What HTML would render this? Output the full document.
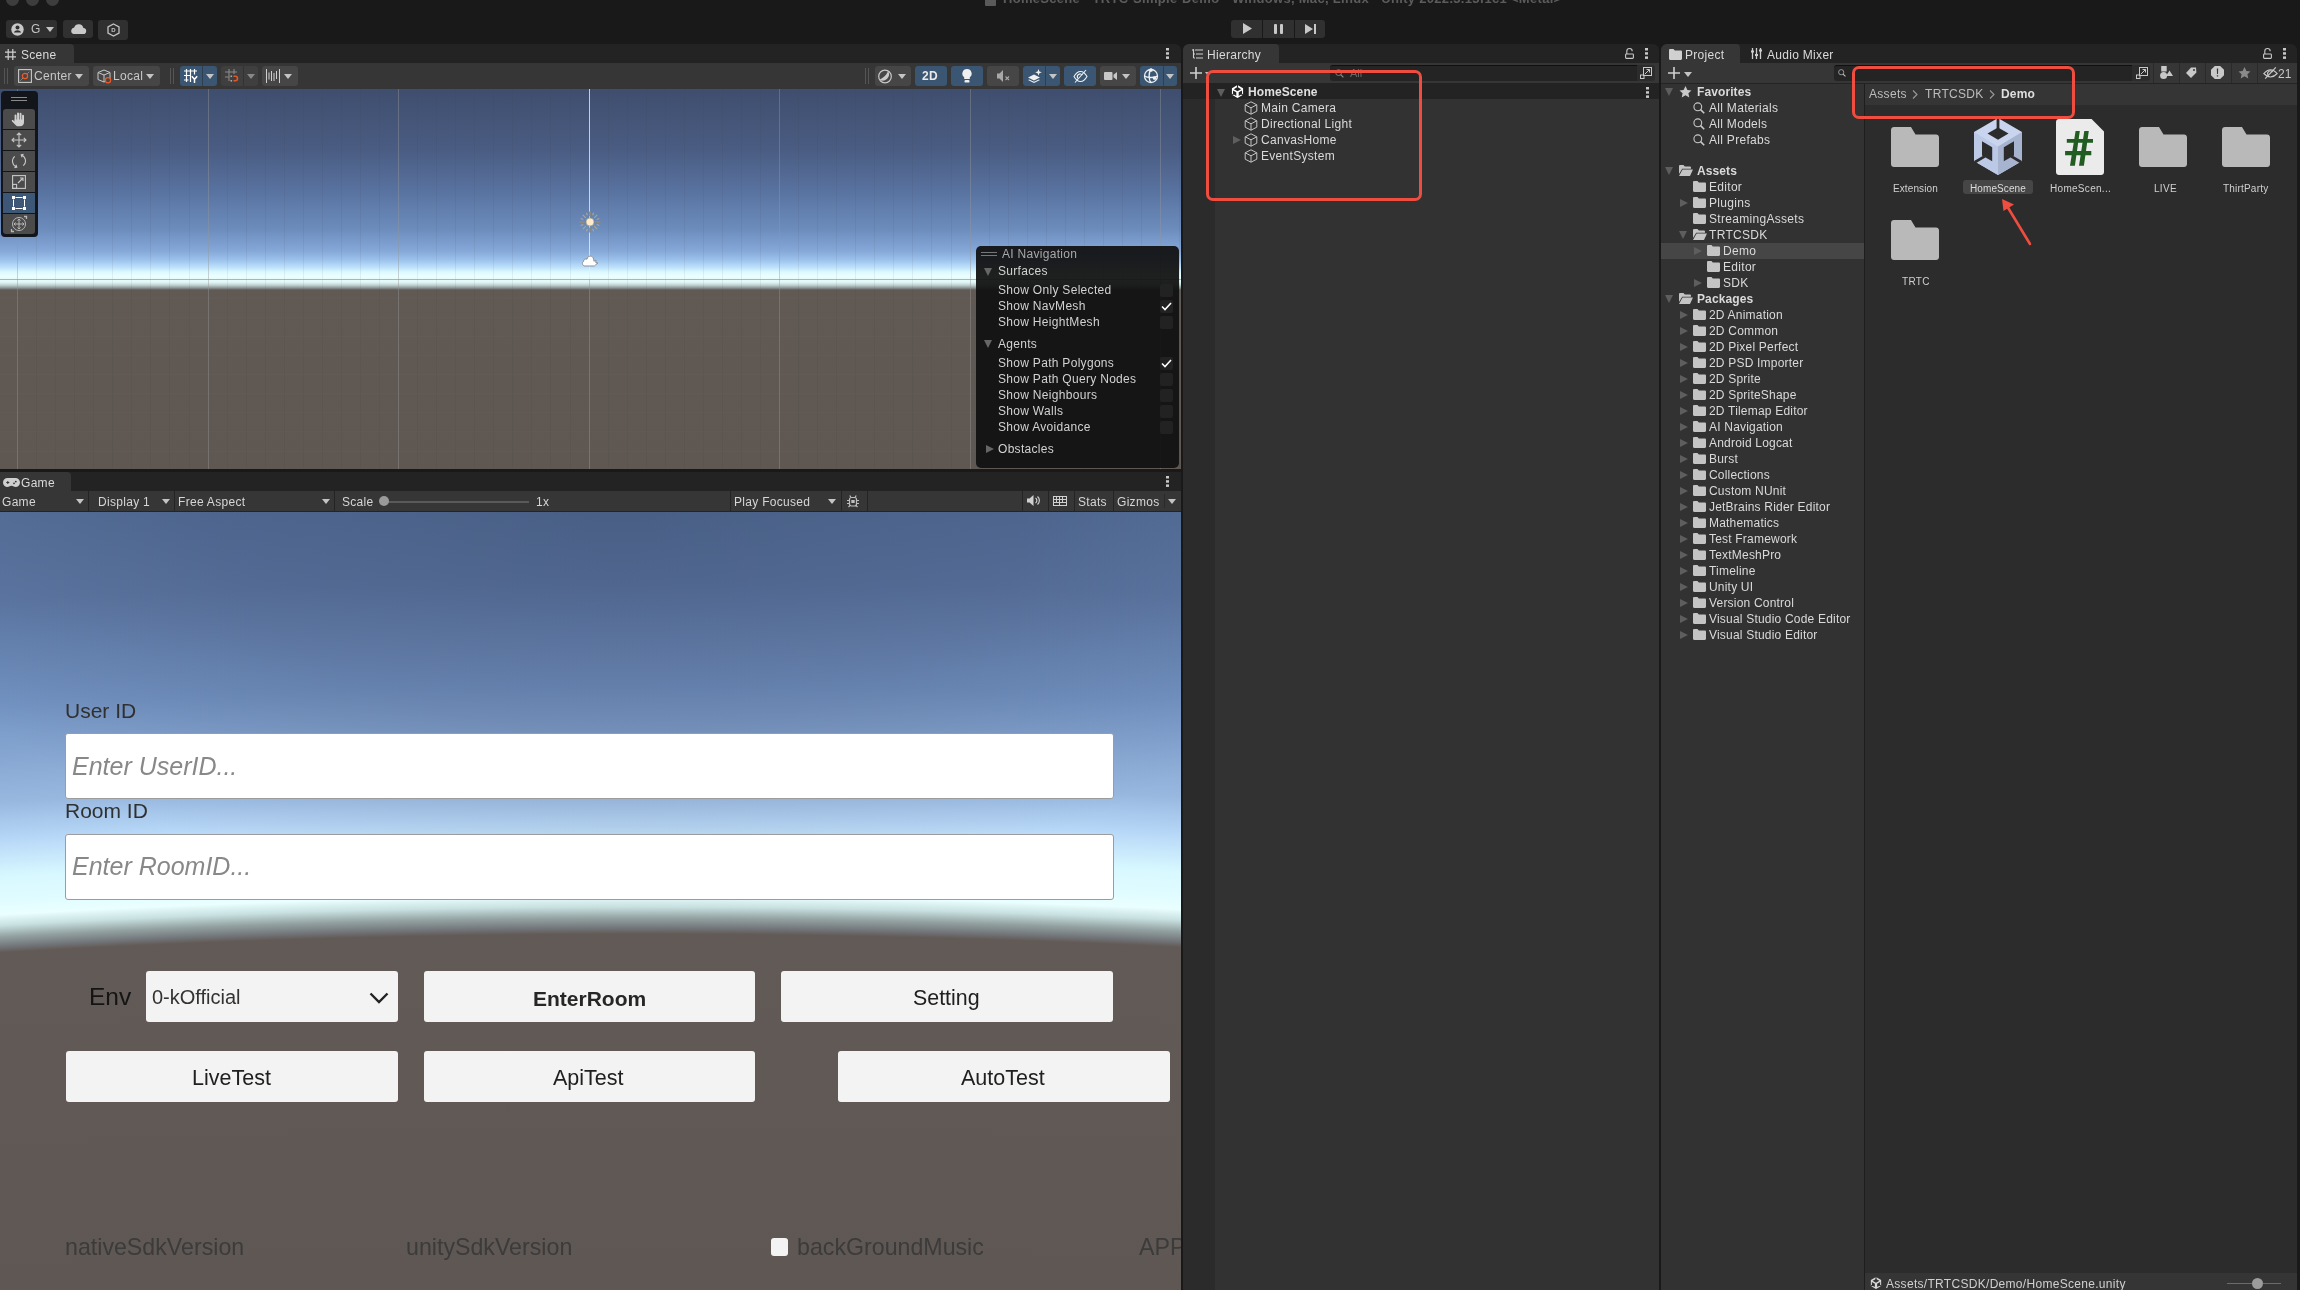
<!DOCTYPE html>
<html><head><meta charset="utf-8">
<style>
*{margin:0;padding:0;box-sizing:border-box}
html,body{width:2300px;height:1290px;overflow:hidden;background:#191919;font-family:"Liberation Sans",sans-serif;color:#dadada}
.a{position:absolute}
.t{position:absolute;white-space:nowrap;font-size:12px;line-height:14px;letter-spacing:0.3px;will-change:transform}
.btn{position:absolute;background:#303030;border-radius:3px}
.tbb{position:absolute;background:#464646;border-radius:3px}
.blu{background:#3b5673}
.sep{position:absolute;width:1px;background:#242424}
.tri-d{position:absolute;width:0;height:0;border-left:4px solid transparent;border-right:4px solid transparent;border-top:5px solid #c4c4c4}
.tri-r{position:absolute;width:0;height:0;border-top:4.5px solid transparent;border-bottom:4.5px solid transparent;border-left:8px solid #5e5e5e}
.tri-dd{position:absolute;width:0;height:0;border-left:4.5px solid transparent;border-right:4.5px solid transparent;border-top:8px solid #5e5e5e}
svg{position:absolute;overflow:visible;will-change:transform}
</style></head><body>

<!-- ===== TITLE BAR / MAIN TOOLBAR ===== -->
<div class="a" style="left:6px;top:-7px;width:13px;height:13px;border-radius:50%;background:#3d3d3d"></div>
<div class="a" style="left:26px;top:-7px;width:13px;height:13px;border-radius:50%;background:#3d3d3d"></div>
<div class="a" style="left:46px;top:-7px;width:13px;height:13px;border-radius:50%;background:#3d3d3d"></div>
<div class="a" style="left:985px;top:-6px;width:11px;height:12px;background:#5a5a5a;border-radius:1px"></div>
<div class="t" style="left:1003px;top:-9px;font-size:13px;line-height:15px;font-weight:bold;color:#5c5c5c">HomeScene - TRTC-Simple-Demo - Windows, Mac, Linux - Unity 2022.3.13f1c1 &lt;Metal&gt;</div>

<div class="btn" style="left:6px;top:20px;width:51px;height:18px"></div>
<div class="btn" style="left:63px;top:20px;width:30px;height:18px"></div>
<div class="btn" style="left:98px;top:20px;width:30px;height:20px"></div>

<div class="btn" style="left:1231px;top:20px;width:31px;height:18px;border-radius:3px 0 0 3px"></div>
<div class="btn" style="left:1263px;top:20px;width:31px;height:18px;border-radius:0"></div>
<div class="btn" style="left:1295px;top:20px;width:30px;height:18px;border-radius:0 3px 3px 0"></div>


<!-- main toolbar icons -->
<svg style="left:11px;top:23px" width="13" height="13" viewBox="0 0 13 13"><circle cx="6.5" cy="6.5" r="6.2" fill="#c8c8c8"/><circle cx="6.5" cy="4.6" r="2" fill="#303030"/><path d="M2.8 9.6c.8-1.6 2.2-2.3 3.7-2.3s2.9.7 3.7 2.3" fill="#303030"/></svg>
<div class="t" style="left:31px;top:23px;font-size:12px;line-height:12px;color:#c4c4c4">G</div>
<div class="tri-d" style="left:46px;top:27px;border-top-color:#c4c4c4"></div>
<svg style="left:70px;top:24px" width="16" height="10" viewBox="0 0 16 10"><path d="M3.5 10h9.5a3 3 0 0 0 .4-6 4.8 4.8 0 0 0-9.2-.6A3.4 3.4 0 0 0 3.5 10z" fill="#c8c8c8"/></svg>
<svg style="left:107px;top:23px" width="13" height="14" viewBox="0 0 13 14"><path d="M6.5 1 12 4v6l-5.5 3L1 10V4z" fill="none" stroke="#c4c4c4" stroke-width="1.3"/><text x="6.5" y="9.3" font-size="6" text-anchor="middle" fill="#c4c4c4" font-family="Liberation Sans" font-weight="bold">D</text></svg>
<svg style="left:1243px;top:23px" width="9" height="11" viewBox="0 0 9 11"><path d="M0 0 9 5.5 0 11z" fill="#c8c8c8"/></svg>
<div class="a" style="left:1274px;top:24px;width:3px;height:10px;background:#c8c8c8;border-radius:1px"></div>
<div class="a" style="left:1280px;top:24px;width:3px;height:10px;background:#c8c8c8;border-radius:1px"></div>
<svg style="left:1305px;top:24px" width="11" height="10" viewBox="0 0 11 10"><path d="M0 0 8 5 0 10z" fill="#c8c8c8"/><rect x="9" y="0" width="2" height="10" fill="#c8c8c8"/></svg>
<!-- ===== SCENE PANEL ===== -->
<div class="a" style="left:0;top:44px;width:1181px;height:19px;background:#232323;border-radius:0 6px 0 0"></div>
<div class="a" style="left:0;top:44px;width:74px;height:19px;background:#363636;border-radius:0 4px 0 0"></div>
<div class="a" style="left:0;top:63px;width:1181px;height:26px;background:#363636"></div>
<div id="sceneview" class="a" style="left:0;top:89px;width:1181px;height:380px;overflow:hidden;background:linear-gradient(#3f4e6e 0px,#4a5c82 60px,#58719e 100px,#6c8cbc 140px,#85a8d8 162px,#9cc2ec 171px,#bce0fa 178px,#dcf8ff 183px,#eaffff 187px,#e4f8f8 193px,#c0d4d4 196px,#8a9290 199px,#605954 201px,#5e5752 380px)">
<div class="a" style="left:17.0px;top:0;width:1px;height:380px;background:rgba(150,150,150,0.42)"></div><div class="a" style="left:36.0px;top:0;width:1px;height:380px;background:rgba(70,70,70,0.08)"></div><div class="a" style="left:55.1px;top:0;width:1px;height:380px;background:rgba(70,70,70,0.08)"></div><div class="a" style="left:74.2px;top:0;width:1px;height:380px;background:rgba(70,70,70,0.08)"></div><div class="a" style="left:93.2px;top:0;width:1px;height:380px;background:rgba(70,70,70,0.08)"></div><div class="a" style="left:112.2px;top:0;width:1px;height:380px;background:rgba(70,70,70,0.08)"></div><div class="a" style="left:131.3px;top:0;width:1px;height:380px;background:rgba(70,70,70,0.08)"></div><div class="a" style="left:150.3px;top:0;width:1px;height:380px;background:rgba(70,70,70,0.08)"></div><div class="a" style="left:169.4px;top:0;width:1px;height:380px;background:rgba(70,70,70,0.08)"></div><div class="a" style="left:188.5px;top:0;width:1px;height:380px;background:rgba(70,70,70,0.08)"></div><div class="a" style="left:207.5px;top:0;width:1px;height:380px;background:rgba(150,150,150,0.42)"></div><div class="a" style="left:226.6px;top:0;width:1px;height:380px;background:rgba(70,70,70,0.08)"></div><div class="a" style="left:245.6px;top:0;width:1px;height:380px;background:rgba(70,70,70,0.08)"></div><div class="a" style="left:264.6px;top:0;width:1px;height:380px;background:rgba(70,70,70,0.08)"></div><div class="a" style="left:283.7px;top:0;width:1px;height:380px;background:rgba(70,70,70,0.08)"></div><div class="a" style="left:302.8px;top:0;width:1px;height:380px;background:rgba(70,70,70,0.08)"></div><div class="a" style="left:321.8px;top:0;width:1px;height:380px;background:rgba(70,70,70,0.08)"></div><div class="a" style="left:340.9px;top:0;width:1px;height:380px;background:rgba(70,70,70,0.08)"></div><div class="a" style="left:359.9px;top:0;width:1px;height:380px;background:rgba(70,70,70,0.08)"></div><div class="a" style="left:378.9px;top:0;width:1px;height:380px;background:rgba(70,70,70,0.08)"></div><div class="a" style="left:398.0px;top:0;width:1px;height:380px;background:rgba(150,150,150,0.42)"></div><div class="a" style="left:417.1px;top:0;width:1px;height:380px;background:rgba(70,70,70,0.08)"></div><div class="a" style="left:436.1px;top:0;width:1px;height:380px;background:rgba(70,70,70,0.08)"></div><div class="a" style="left:455.2px;top:0;width:1px;height:380px;background:rgba(70,70,70,0.08)"></div><div class="a" style="left:474.2px;top:0;width:1px;height:380px;background:rgba(70,70,70,0.08)"></div><div class="a" style="left:493.2px;top:0;width:1px;height:380px;background:rgba(70,70,70,0.08)"></div><div class="a" style="left:512.3px;top:0;width:1px;height:380px;background:rgba(70,70,70,0.08)"></div><div class="a" style="left:531.4px;top:0;width:1px;height:380px;background:rgba(70,70,70,0.08)"></div><div class="a" style="left:550.4px;top:0;width:1px;height:380px;background:rgba(70,70,70,0.08)"></div><div class="a" style="left:569.5px;top:0;width:1px;height:380px;background:rgba(70,70,70,0.08)"></div><div class="a" style="left:588.5px;top:0;width:1px;height:190px;background:rgba(235,235,235,0.8)"></div><div class="a" style="left:588.5px;top:190px;width:1px;height:190px;background:rgba(150,150,150,0.45)"></div><div class="a" style="left:607.6px;top:0;width:1px;height:380px;background:rgba(70,70,70,0.08)"></div><div class="a" style="left:626.6px;top:0;width:1px;height:380px;background:rgba(70,70,70,0.08)"></div><div class="a" style="left:645.6px;top:0;width:1px;height:380px;background:rgba(70,70,70,0.08)"></div><div class="a" style="left:664.7px;top:0;width:1px;height:380px;background:rgba(70,70,70,0.08)"></div><div class="a" style="left:683.8px;top:0;width:1px;height:380px;background:rgba(70,70,70,0.08)"></div><div class="a" style="left:702.8px;top:0;width:1px;height:380px;background:rgba(70,70,70,0.08)"></div><div class="a" style="left:721.9px;top:0;width:1px;height:380px;background:rgba(70,70,70,0.08)"></div><div class="a" style="left:740.9px;top:0;width:1px;height:380px;background:rgba(70,70,70,0.08)"></div><div class="a" style="left:760.0px;top:0;width:1px;height:380px;background:rgba(70,70,70,0.08)"></div><div class="a" style="left:779.0px;top:0;width:1px;height:380px;background:rgba(150,150,150,0.42)"></div><div class="a" style="left:798.1px;top:0;width:1px;height:380px;background:rgba(70,70,70,0.08)"></div><div class="a" style="left:817.1px;top:0;width:1px;height:380px;background:rgba(70,70,70,0.08)"></div><div class="a" style="left:836.1px;top:0;width:1px;height:380px;background:rgba(70,70,70,0.08)"></div><div class="a" style="left:855.2px;top:0;width:1px;height:380px;background:rgba(70,70,70,0.08)"></div><div class="a" style="left:874.2px;top:0;width:1px;height:380px;background:rgba(70,70,70,0.08)"></div><div class="a" style="left:893.3px;top:0;width:1px;height:380px;background:rgba(70,70,70,0.08)"></div><div class="a" style="left:912.4px;top:0;width:1px;height:380px;background:rgba(70,70,70,0.08)"></div><div class="a" style="left:931.4px;top:0;width:1px;height:380px;background:rgba(70,70,70,0.08)"></div><div class="a" style="left:950.5px;top:0;width:1px;height:380px;background:rgba(70,70,70,0.08)"></div><div class="a" style="left:969.5px;top:0;width:1px;height:380px;background:rgba(150,150,150,0.42)"></div><div class="a" style="left:988.6px;top:0;width:1px;height:380px;background:rgba(70,70,70,0.08)"></div><div class="a" style="left:1007.6px;top:0;width:1px;height:380px;background:rgba(70,70,70,0.08)"></div><div class="a" style="left:1026.7px;top:0;width:1px;height:380px;background:rgba(70,70,70,0.08)"></div><div class="a" style="left:1045.7px;top:0;width:1px;height:380px;background:rgba(70,70,70,0.08)"></div><div class="a" style="left:1064.8px;top:0;width:1px;height:380px;background:rgba(70,70,70,0.08)"></div><div class="a" style="left:1083.8px;top:0;width:1px;height:380px;background:rgba(70,70,70,0.08)"></div><div class="a" style="left:1102.9px;top:0;width:1px;height:380px;background:rgba(70,70,70,0.08)"></div><div class="a" style="left:1121.9px;top:0;width:1px;height:380px;background:rgba(70,70,70,0.08)"></div><div class="a" style="left:1141.0px;top:0;width:1px;height:380px;background:rgba(70,70,70,0.08)"></div><div class="a" style="left:1160.0px;top:0;width:1px;height:380px;background:rgba(150,150,150,0.42)"></div><div class="a" style="left:1179.0px;top:0;width:1px;height:380px;background:rgba(70,70,70,0.08)"></div>
<div class="a" style="left:0;top:209.1px;width:1181px;height:1px;background:rgba(200,200,200,0.025)"></div><div class="a" style="left:0;top:228.1px;width:1181px;height:1px;background:rgba(200,200,200,0.025)"></div><div class="a" style="left:0;top:247.2px;width:1181px;height:1px;background:rgba(200,200,200,0.025)"></div><div class="a" style="left:0;top:266.2px;width:1181px;height:1px;background:rgba(200,200,200,0.025)"></div><div class="a" style="left:0;top:285.2px;width:1181px;height:1px;background:rgba(200,200,200,0.025)"></div><div class="a" style="left:0;top:304.3px;width:1181px;height:1px;background:rgba(200,200,200,0.025)"></div><div class="a" style="left:0;top:323.4px;width:1181px;height:1px;background:rgba(200,200,200,0.025)"></div><div class="a" style="left:0;top:342.4px;width:1181px;height:1px;background:rgba(200,200,200,0.025)"></div><div class="a" style="left:0;top:361.5px;width:1181px;height:1px;background:rgba(200,200,200,0.025)"></div><div class="a" style="left:0;top:190px;width:1181px;height:1px;background:rgba(150,150,150,0.7)"></div>
<svg style="left:579px;top:122px" width="22" height="22" viewBox="-11 -11 22 22"><g stroke="#8a8a80" stroke-width="1.8"><path d="M0-10.5v5M0 5.5v5M-10.5 0h5M5.5 0h5"/></g><g stroke="#a8a89c" stroke-width="1.1"><path d="M-7.2-7.2l3 3M7.2 7.2l-3-3M-7.2 7.2l3-3M7.2-7.2l-3 3"/><path d="M-3.6-9.3l1 2.6M3.6 9.3l-1-2.6M-9.3 3.6l2.6-1M9.3-3.6l-2.6 1M3.6-9.3l-1 2.6M-3.6 9.3l1-2.6M-9.3-3.6l2.6 1M9.3 3.6l-2.6-1"/></g><circle r="4" fill="#fdebc8" stroke="#9a9080" stroke-width=".6"/></svg>
<svg style="left:581px;top:164px" width="18" height="14" viewBox="0 0 18 14"><path d="M4 13c-2.6 0-3.6-3.4-1.4-4.6C2.4 6.2 4.6 5.4 6 6.2 6.4 2.2 12 2 12.6 6.2c.1.8.1 1.4.3 2l2.2-1.1-.4 2.4 2.3.5-2.1 1.4c-.3.9-1 1.6-2 1.6z" fill="#ffffff" stroke="#8f8f8f" stroke-width="1"/></svg>
<!-- tools overlay -->
<div class="a" style="left:1px;top:2px;width:37px;height:146px;background:#12151a;border-radius:4px"></div>
<div class="a" style="left:11px;top:8px;width:16px;height:1px;background:#8a8a8a"></div>
<div class="a" style="left:11px;top:11px;width:16px;height:1px;background:#8a8a8a"></div>
<div class="a" style="left:3px;top:20px;width:32px;height:20px;background:#4b4b4b;border-radius:3px 3px 0 0"></div>
<div class="a" style="left:3px;top:41px;width:32px;height:20px;background:#4b4b4b"></div>
<div class="a" style="left:3px;top:62px;width:32px;height:20px;background:#4b4b4b"></div>
<div class="a" style="left:3px;top:83px;width:32px;height:20px;background:#4b4b4b"></div>
<div class="a" style="left:3px;top:104px;width:32px;height:20px;background:#3c5876"></div>
<div class="a" style="left:3px;top:125px;width:32px;height:20px;background:#4b4b4b;border-radius:0 0 3px 3px"></div>
<svg style="left:11px;top:22px" width="16" height="16" viewBox="0 0 16 16" fill="#d0d0d0"><rect x="3.6" y="3.6" width="1.9" height="7" rx=".95"/><rect x="6.1" y="1.4" width="1.9" height="9" rx=".95"/><rect x="8.6" y="1.8" width="1.9" height="8.6" rx=".95"/><rect x="11.1" y="3.8" width="1.9" height="6.8" rx=".95"/><path d="M3.6 8.6h9.4v2.6c0 2.4-1.7 4.1-4 4.1H7.2c-1.2 0-2-.4-2.7-1.3L.9 10.2c-.5-.7.3-1.5 1-1.1L3.6 10.4z"/></svg>
<svg style="left:11px;top:43px" width="16" height="16" viewBox="0 0 16 16" fill="none" stroke="#c8c8c8" stroke-width="1.1"><path d="M8 1v14M1 8h14M5.8 3.2 8 1l2.2 2.2M5.8 12.8 8 15l2.2-2.2M3.2 5.8 1 8l2.2 2.2M12.8 5.8 15 8l-2.2 2.2"/></svg>
<svg style="left:11px;top:64px" width="16" height="16" viewBox="0 0 16 16" fill="none" stroke="#c8c8c8" stroke-width="1.1"><path d="M10.3 1.9A6.3 6.3 0 0 1 12.2 12.7"/><path d="M5.7 14.1A6.3 6.3 0 0 1 3.8 3.3"/><path d="M12.6 1.2 10.2 1.9l.9 2.3M3.4 14.8l2.4-.7-.9-2.3"/></svg>
<svg style="left:12px;top:86px" width="14" height="14" viewBox="0 0 14 14" fill="none" stroke="#c8c8c8" stroke-width="1.1"><rect x=".6" y=".6" width="12.8" height="12.8"/><rect x=".6" y="9.4" width="4" height="4"/><path d="M6 8l5-5M8 3h3v3"/></svg>
<svg style="left:12px;top:107px" width="14" height="14" viewBox="0 0 14 14"><path d="M3.5 1.5h7M3.5 12.5h7M1.5 3.5v7M12.5 3.5v7" stroke="#fff" stroke-width="1"/><g fill="#fff"><rect x="0" y="0" width="3" height="3"/><rect x="11" y="0" width="3" height="3"/><rect x="0" y="11" width="3" height="3"/><rect x="11" y="11" width="3" height="3"/></g></svg>
<svg style="left:11px;top:127px" width="16" height="16" viewBox="0 0 16 16" fill="none" stroke="#b8b8b8" stroke-width="1"><circle cx="8" cy="8" r="6.5"/><path d="M8 3v10M3 8h10M6.5 4.5 8 3l1.5 1.5M6.5 11.5 8 13l1.5-1.5M4.5 6.5 3 8l1.5 1.5M11.5 6.5 13 8l-1.5 1.5"/><path d="M13 .5h2.5V3M3 15.5H.5V13" stroke-width="1.3"/></svg>
<!-- AI navigation overlay -->
<div class="a" style="left:976px;top:157px;width:203px;height:222px;background:rgba(17,17,17,0.94);border-radius:5px"></div>
<div class="a" style="left:981px;top:163px;width:16px;height:1px;background:#777"></div>
<div class="a" style="left:981px;top:166px;width:16px;height:1px;background:#777"></div>
<div class="t" style="left:1002px;top:159px;font-size:12px;line-height:12px;color:#a8a8a8">AI Navigation</div>
<div class="tri-dd" style="left:984px;top:179px;border-top-color:#666"></div>
<div class="t" style="left:998px;top:176px;font-size:12px;line-height:12px;color:#d2d2d2">Surfaces</div>
<div class="t" style="left:998px;top:195px;font-size:12px;line-height:12px;color:#d2d2d2">Show Only Selected</div>
<div class="t" style="left:998px;top:211px;font-size:12px;line-height:12px;color:#d2d2d2">Show NavMesh</div>
<div class="t" style="left:998px;top:227px;font-size:12px;line-height:12px;color:#d2d2d2">Show HeightMesh</div>
<div class="tri-dd" style="left:984px;top:251px;border-top-color:#666"></div>
<div class="t" style="left:998px;top:249px;font-size:12px;line-height:12px;color:#d2d2d2">Agents</div>
<div class="t" style="left:998px;top:268px;font-size:12px;line-height:12px;color:#d2d2d2">Show Path Polygons</div>
<div class="t" style="left:998px;top:284px;font-size:12px;line-height:12px;color:#d2d2d2">Show Path Query Nodes</div>
<div class="t" style="left:998px;top:300px;font-size:12px;line-height:12px;color:#d2d2d2">Show Neighbours</div>
<div class="t" style="left:998px;top:316px;font-size:12px;line-height:12px;color:#d2d2d2">Show Walls</div>
<div class="t" style="left:998px;top:332px;font-size:12px;line-height:12px;color:#d2d2d2">Show Avoidance</div>
<div class="tri-r" style="left:986px;top:356px;border-left-color:#666"></div>
<div class="t" style="left:998px;top:354px;font-size:12px;line-height:12px;color:#d2d2d2">Obstacles</div>
<div class="a" style="left:1160px;top:195px;width:13px;height:13px;background:#222;border-radius:2px"></div><div class="a" style="left:1160px;top:211px;width:13px;height:13px;background:#222;border-radius:2px"></div><svg style="left:1161px;top:213px" width="11" height="9" viewBox="0 0 11 9"><path d="M1 4.5 4 7.5 10 1" fill="none" stroke="#ffffff" stroke-width="1.6"/></svg><div class="a" style="left:1160px;top:227px;width:13px;height:13px;background:#222;border-radius:2px"></div><div class="a" style="left:1160px;top:268px;width:13px;height:13px;background:#222;border-radius:2px"></div><svg style="left:1161px;top:270px" width="11" height="9" viewBox="0 0 11 9"><path d="M1 4.5 4 7.5 10 1" fill="none" stroke="#ffffff" stroke-width="1.6"/></svg><div class="a" style="left:1160px;top:284px;width:13px;height:13px;background:#222;border-radius:2px"></div><div class="a" style="left:1160px;top:300px;width:13px;height:13px;background:#222;border-radius:2px"></div><div class="a" style="left:1160px;top:316px;width:13px;height:13px;background:#222;border-radius:2px"></div><div class="a" style="left:1160px;top:332px;width:13px;height:13px;background:#222;border-radius:2px"></div>
</div>


<!-- scene tab -->
<svg style="left:5px;top:48.5px" width="11" height="11" viewBox="0 0 12 12" stroke="#d0d0d0" stroke-width="1.3"><path d="M3.5 0v12M8.5 0v12M0 3.5h12M0 8.5h12"/></svg>
<div class="t" style="left:21px;top:49px;font-size:12px;line-height:12px;color:#dadada">Scene</div>
<svg style="left:1166px;top:48px" width="3" height="11" viewBox="0 0 3 11" fill="#c8c8c8"><rect x="0" y="0" width="3" height="2.5"/><rect x="0" y="4.2" width="3" height="2.5"/><rect x="0" y="8.4" width="3" height="2.5"/></svg>
<!-- scene toolbar left -->
<div class="a" style="left:4px;top:68px;width:1px;height:16px;background:#555"></div>
<div class="a" style="left:7px;top:68px;width:1px;height:16px;background:#555"></div>
<div class="tbb" style="left:14px;top:66px;width:75px;height:20px"></div>
<svg style="left:18px;top:69px" width="14" height="14" viewBox="0 0 14 14"><rect x=".6" y=".6" width="12.8" height="12.8" fill="none" stroke="#c8c8c8" stroke-width="1.1"/><path d="M2.5 11.5 11.5 2.5" stroke="#c8c8c8" stroke-width=".8" stroke-dasharray="1.5 1"/><circle cx="7" cy="7" r="2.6" fill="#464646" stroke="#f05a28" stroke-width="1.2"/></svg>
<div class="t" style="left:34px;top:70px;font-size:12px;line-height:12px;color:#c8c8c8">Center</div>
<div class="tri-d" style="left:75px;top:74px"></div>
<div class="tbb" style="left:93px;top:66px;width:67px;height:20px"></div>
<svg style="left:97px;top:69px" width="16" height="15" viewBox="0 0 16 15"><path d="M7 1 13 3.5v7L7 13 1 10.5v-7z M1 3.5 7 6l6-2.5M7 6v7" fill="none" stroke="#c8c8c8" stroke-width="1"/><circle cx="11" cy="11.3" r="2.6" fill="#464646" stroke="#f05a28" stroke-width="1.2"/></svg>
<div class="t" style="left:113px;top:70px;font-size:12px;line-height:12px;color:#c8c8c8">Local</div>
<div class="tri-d" style="left:146px;top:74px"></div>
<div class="a" style="left:170px;top:68px;width:1px;height:16px;background:#555"></div>
<div class="a" style="left:173px;top:68px;width:1px;height:16px;background:#555"></div>
<div class="tbb blu" style="left:180px;top:66px;width:37px;height:20px"></div>
<div class="a" style="left:202px;top:66px;width:1px;height:20px;background:#2e3f52"></div>
<svg style="left:184px;top:69px" width="14" height="14" viewBox="0 0 14 14" fill="none" stroke="#ffffff" stroke-width="1.2"><path d="M2.5 0v13M6.5 0v13M10.5 0v5.5M0 2h13M0 6.5h6.5M0 11h4.5"/><path d="M7.8 7.2 10.5 10.3 13.2 7.2M10.5 10.3V14" stroke-width="1.5"/></svg>
<div class="tri-d" style="left:206px;top:74px"></div>
<div class="tbb" style="left:221px;top:66px;width:37px;height:20px;background:#3f3f3f"></div>
<div class="a" style="left:243px;top:66px;width:1px;height:20px;background:#333"></div>
<svg style="left:225px;top:69px" width="14" height="14" viewBox="0 0 14 14"><path d="M4 0v12M9 0v5M0 3h12M0 8h4" stroke="#8a8a8a" stroke-width="1.1"/><rect x="5.5" y="6.5" width="1.6" height="1.6" fill="#aaa"/><rect x="5.5" y="11" width="1.6" height="1.6" fill="#aaa"/><path d="M8.5 7.3h1.8a2.2 2.2 0 0 1 0 4.4H8.5" fill="none" stroke="#e0582a" stroke-width="1.6"/></svg>
<div class="tri-d" style="left:247px;top:74px;border-top-color:#888"></div>
<div class="tbb" style="left:262px;top:66px;width:36px;height:20px"></div>
<svg style="left:266px;top:69px" width="14" height="14" viewBox="0 0 14 14" fill="none" stroke="#d0d0d0" stroke-width="1"><path d="M.5 0v14M13.5 0v14M3 3.5v7M5.5 2v10M8 4v8M10.5 2v8"/></svg>
<div class="tri-d" style="left:284px;top:74px"></div>
<!-- scene toolbar right -->
<div class="a" style="left:865px;top:68px;width:1px;height:16px;background:#555"></div>
<div class="a" style="left:868px;top:68px;width:1px;height:16px;background:#555"></div>
<div class="tbb" style="left:875px;top:66px;width:36px;height:20px"></div>
<svg style="left:878px;top:69px" width="15" height="15" viewBox="0 0 15 15"><circle cx="7" cy="7.5" r="6.3" fill="none" stroke="#c8c8c8" stroke-width="1.2"/><path d="M10.15 2.04A6.3 6.3 0 0 1 1.54 10.65A16 16 0 0 0 10.15 2.04z" fill="#c8c8c8"/></svg>
<div class="tri-d" style="left:898px;top:74px"></div>
<div class="tbb blu" style="left:915px;top:66px;width:32px;height:20px"></div>
<div class="t" style="left:922px;top:70px;font-size:12px;line-height:12px;font-weight:bold;color:#e8e8e8">2D</div>
<div class="tbb blu" style="left:951px;top:66px;width:32px;height:20px"></div>
<svg style="left:962px;top:69px" width="10" height="14" viewBox="0 0 10 14"><path d="M5 0a4.6 4.6 0 0 1 2.8 8.3V10H2.2V8.3A4.6 4.6 0 0 1 5 0z" fill="#f0f0f0"/><rect x="2.5" y="11" width="5" height="2.6" rx="1.2" fill="#f0f0f0"/></svg>
<div class="tbb" style="left:987px;top:66px;width:32px;height:20px"></div>
<svg style="left:997px;top:70px" width="14" height="12" viewBox="0 0 14 12"><path d="M0 3.5h2.5L6 0v12L2.5 8.5H0z" fill="#a8a8a8"/><path d="M8.5 6.5 12 10M12 6.5 8.5 10" stroke="#a8a8a8" stroke-width="1.1"/></svg>
<div class="tbb blu" style="left:1023px;top:66px;width:37px;height:20px"></div>
<div class="a" style="left:1045px;top:66px;width:1px;height:20px;background:#2e3f52"></div>
<svg style="left:1027px;top:68px" width="16" height="16" viewBox="0 0 16 16" fill="#f0f0f0"><path d="M1 9.5 7 6.5l6 3-6 3z M1 12l6 3 6-3-1.2-.6L7 13.8 2.2 11.4z"/><path d="M11.5 1l.9 2.4 2.4.9-2.4.9-.9 2.4-.9-2.4-2.4-.9 2.4-.9z"/></svg>
<div class="tri-d" style="left:1049px;top:74px"></div>
<div class="tbb blu" style="left:1064px;top:66px;width:32px;height:20px"></div>
<svg style="left:1073px;top:69px" width="15" height="14" viewBox="0 0 15 14" fill="none" stroke="#f0f0f0" stroke-width="1.1"><path d="M1 7.5c2-3.5 4.2-5 6.5-5s4.5 1.5 6.5 5c-2 3.5-4.2 5-6.5 5S3 11 1 7.5z"/><path d="M13 1 2 13.5"/><path d="M5 9.5a2.7 2.7 0 0 1 4.5-3.5"/></svg>
<div class="tbb" style="left:1100px;top:66px;width:36px;height:20px"></div>
<svg style="left:1104px;top:71px" width="13" height="10" viewBox="0 0 13 10" fill="#c8c8c8"><rect x="0" y="1" width="8.5" height="8" rx="1"/><path d="M9.5 3.8 13 1v8L9.5 6.2z"/></svg>
<div class="tri-d" style="left:1122px;top:74px"></div>
<div class="tbb blu" style="left:1140px;top:66px;width:37px;height:20px"></div>
<div class="a" style="left:1163px;top:66px;width:1px;height:20px;background:#2e3f52"></div>
<svg style="left:1143px;top:68px" width="16" height="16" viewBox="0 0 16 16" fill="none" stroke="#f0f0f0" stroke-width="1.3"><circle cx="8" cy="8" r="6.5"/><path d="M1.5 8c2.5 2 10.5 2 13 0M8 1.5C5.5 4 5.5 12 8 14.5"/><circle cx="8" cy="2" r="1.2" fill="#f0f0f0"/><circle cx="11.5" cy="10" r="1.2" fill="#f0f0f0"/></svg>
<div class="tri-d" style="left:1166px;top:74px"></div>
<!-- ===== GAME PANEL ===== -->
<div class="a" style="left:0;top:469px;width:1181px;height:3px;background:#191919"></div>
<div class="a" style="left:0;top:472px;width:1181px;height:19px;background:#232323"></div>
<div class="a" style="left:0;top:472px;width:71px;height:19px;background:#363636;border-radius:0 4px 0 0"></div>
<div class="a" style="left:0;top:491px;width:1181px;height:20px;background:#363636"></div>
<div id="gameview" class="a" style="left:0;top:511px;width:1181px;height:779px;overflow:hidden;background:radial-gradient(ellipse 740px 400px at 620px 0px, rgba(40,50,80,0.3) 0%, rgba(40,50,80,0.18) 55%, rgba(40,50,80,0) 100%),radial-gradient(circle 11600px at 640px 11422px,#5f5753 10643px,#625a56 10999px,#72767a 11005px,#94a2a2 11015px,#c8e0e0 11026px,#eaffff 11037px,#e0fcff 11051px,#d8f8ff 11075px,#b8d8f8 11111px,#98b8e0 11149px,#7393c2 11246px,#5d78a4 11351px,#55709a 11440px)">
<div class="a" style="left:65px;top:222px;width:1049px;height:66px;background:#fff;border:1px solid #9c9c9c;border-radius:3px"></div>
<div class="a" style="left:65px;top:323px;width:1049px;height:66px;background:#fff;border:1px solid #9c9c9c;border-radius:3px"></div>
<div class="t" style="left:65px;top:189px;font-size:21px;line-height:21px;letter-spacing:0;color:#303030">User ID</div>
<div class="t" style="left:65px;top:289px;font-size:21px;line-height:21px;letter-spacing:0;color:#303030">Room ID</div>
<div class="t" style="left:72px;top:243px;font-size:25px;line-height:25px;letter-spacing:0;font-style:italic;color:#888888">Enter UserID...</div>
<div class="t" style="left:72px;top:343px;font-size:25px;line-height:25px;letter-spacing:0;font-style:italic;color:#888888">Enter RoomID...</div>
<div class="t" style="left:89px;top:474px;font-size:24.5px;line-height:24.5px;letter-spacing:0;color:#141414">Env</div>
<div class="a" style="left:146px;top:460px;width:252px;height:51px;background:#f3f3f3;border-radius:3px"></div>
<div class="t" style="left:152px;top:476px;font-size:20px;line-height:20px;letter-spacing:0;color:#333333">0-kOfficial</div>
<svg style="left:369px;top:481px" width="20" height="12" viewBox="0 0 20 12"><path d="M1.5 1.5 10 10 18.5 1.5" fill="none" stroke="#222" stroke-width="2.4"/></svg>
<div class="a" style="left:424px;top:460px;width:331px;height:51px;background:#f3f3f3;border-radius:3px"></div>
<div class="t" style="left:533px;top:477px;font-size:21px;line-height:21px;letter-spacing:0;font-weight:bold;color:#262626">EnterRoom</div>
<div class="a" style="left:781px;top:460px;width:332px;height:51px;background:#f3f3f3;border-radius:3px"></div>
<div class="t" style="left:913px;top:477px;font-size:21.4px;line-height:21px;letter-spacing:0;color:#202020">Setting</div>
<div class="a" style="left:66px;top:540px;width:332px;height:51px;background:#f3f3f3;border-radius:3px"></div>
<div class="t" style="left:192px;top:557px;font-size:21.5px;line-height:21px;letter-spacing:0;color:#202020">LiveTest</div>
<div class="a" style="left:424px;top:540px;width:331px;height:51px;background:#f3f3f3;border-radius:3px"></div>
<div class="t" style="left:553px;top:557px;font-size:21.5px;line-height:21px;letter-spacing:0;color:#202020">ApiTest</div>
<div class="a" style="left:838px;top:540px;width:332px;height:51px;background:#f3f3f3;border-radius:3px"></div>
<div class="t" style="left:961px;top:557px;font-size:21.5px;line-height:21px;letter-spacing:0;color:#202020">AutoTest</div>
<div class="t" style="left:65px;top:725px;font-size:23.2px;line-height:23px;letter-spacing:0;color:#3b3b3b">nativeSdkVersion</div>
<div class="t" style="left:406px;top:725px;font-size:23.2px;line-height:23px;letter-spacing:0;color:#3b3b3b">unitySdkVersion</div>
<div class="a" style="left:771px;top:727px;width:17px;height:18px;background:#f3f3f3;border-radius:3px"></div>
<div class="t" style="left:797px;top:725px;font-size:23.2px;line-height:23px;letter-spacing:0;color:#3b3b3b">backGroundMusic</div>
<div class="t" style="left:1139px;top:725px;font-size:23.2px;line-height:23px;letter-spacing:0;color:#3b3b3b">APP</div>
</div>
<div class="a" style="left:0;top:511px;width:1181px;height:1px;background:#242424"></div>
<!-- game tab -->
<svg style="left:4px;top:478px" width="15" height="9" viewBox="0 0 15 9"><path d="M3.5 0h8a3.5 3.5 0 0 1 0 9c-1.5 0-2-1.3-4-1.3S5 9 3.5 9a3.5 3.5 0 0 1 0-9z" fill="#cfcfcf"/><path d="M2.3 4.5h3M3.8 3v3" stroke="#333" stroke-width="1"/><circle cx="10" cy="5.3" r=".9" fill="#333"/><circle cx="11.8" cy="3.6" r=".9" fill="#333"/></svg>
<div class="t" style="left:21px;top:477px;font-size:12px;line-height:12px;color:#dadada">Game</div>
<svg style="left:1166px;top:476px" width="3" height="11" viewBox="0 0 3 11" fill="#c8c8c8"><rect x="0" y="0" width="3" height="2.5"/><rect x="0" y="4.2" width="3" height="2.5"/><rect x="0" y="8.4" width="3" height="2.5"/></svg>
<div class="t" style="left:2px;top:496px;font-size:12px;line-height:12px;color:#d6d6d6">Game</div>
<div class="tri-d" style="left:76px;top:499px"></div>
<div class="sep" style="left:88px;top:491px;height:20px"></div>
<div class="t" style="left:98px;top:496px;font-size:12px;line-height:12px;color:#d6d6d6">Display 1</div>
<div class="tri-d" style="left:162px;top:499px"></div>
<div class="sep" style="left:174px;top:491px;height:20px"></div>
<div class="t" style="left:178px;top:496px;font-size:12px;line-height:12px;color:#d6d6d6">Free Aspect</div>
<div class="tri-d" style="left:322px;top:499px"></div>
<div class="sep" style="left:334px;top:491px;height:20px"></div>
<div class="t" style="left:342px;top:496px;font-size:12px;line-height:12px;color:#d6d6d6">Scale</div>
<div class="a" style="left:384px;top:501px;width:145px;height:2px;background:#5a5a5a"></div>
<div class="a" style="left:379px;top:496px;width:10px;height:10px;border-radius:50%;background:#9a9a9a"></div>
<div class="t" style="left:536px;top:496px;font-size:12px;line-height:12px;color:#d6d6d6">1x</div>
<div class="sep" style="left:730px;top:491px;height:20px"></div>
<div class="t" style="left:734px;top:496px;font-size:12px;line-height:12px;color:#d6d6d6">Play Focused</div>
<div class="tri-d" style="left:828px;top:499px"></div>
<div class="sep" style="left:841px;top:491px;height:20px"></div>
<svg style="left:846px;top:494px" width="14" height="14" viewBox="0 0 14 14" fill="none" stroke="#bdbdbd" stroke-width="1.2"><rect x="3.5" y="3.5" width="7" height="8.5" rx="2"/><rect x="5.3" y="6" width="3.4" height="3" fill="#bdbdbd" stroke="none"/><path d="M5 3.5 3.8 1.5M9 3.5l1.2-2M3.5 6.5H1M3.5 9.5H1M10.5 6.5H13M10.5 9.5H13M4 11.5 2.5 13M10 11.5l1.5 1.5"/></svg>
<div class="sep" style="left:867px;top:491px;height:20px"></div>
<div class="sep" style="left:1022px;top:491px;height:20px"></div>
<svg style="left:1027px;top:495px" width="14" height="11" viewBox="0 0 14 11"><path d="M0 3.5h2.5L6.5 0v11L2.5 7.5H0z" fill="#d0d0d0"/><path d="M8.5 3a3 3 0 0 1 0 5M10.5 1.5a5.2 5.2 0 0 1 0 8" fill="none" stroke="#d0d0d0" stroke-width="1.2"/></svg>
<div class="sep" style="left:1048px;top:491px;height:20px"></div>
<svg style="left:1053px;top:496px" width="14" height="10" viewBox="0 0 14 10" fill="none" stroke="#d0d0d0" stroke-width="1"><rect x=".5" y=".5" width="13" height="9"/><path d="M.5 3.5h13M.5 6.5h13M3.5.5v6M6.5.5v9M9.5.5v6"/></svg>
<div class="sep" style="left:1074px;top:491px;height:20px"></div>
<div class="t" style="left:1078px;top:496px;font-size:12px;line-height:12px;color:#d6d6d6">Stats</div>
<div class="sep" style="left:1113px;top:491px;height:20px"></div>
<div class="t" style="left:1117px;top:496px;font-size:12px;line-height:12px;color:#d6d6d6">Gizmos</div>
<div class="sep" style="left:1164px;top:494px;height:14px;background:#2a2a2a"></div>
<div class="tri-d" style="left:1168px;top:499px"></div>


<!-- ===== HIERARCHY PANEL ===== -->
<div class="a" style="left:1183px;top:44px;width:476px;height:19px;background:#232323;border-radius:6px 6px 0 0"></div>
<div class="a" style="left:1183px;top:44px;width:96px;height:19px;background:#363636;border-radius:6px 4px 0 0"></div>
<div class="a" style="left:1183px;top:63px;width:476px;height:20px;background:#363636"></div>
<div class="a" style="left:1183px;top:83px;width:476px;height:16px;background:#232323"></div>
<div class="a" style="left:1183px;top:99px;width:476px;height:1191px;background:#323232"></div>
<div class="a" style="left:1183px;top:99px;width:32px;height:1191px;background:#2b2b2b"></div>

<!-- ===== PROJECT PANEL ===== -->
<div class="a" style="left:1661px;top:44px;width:636px;height:19px;background:#232323;border-radius:6px 6px 0 0"></div>
<div class="a" style="left:1661px;top:44px;width:79px;height:19px;background:#363636;border-radius:6px 4px 0 0"></div>
<div class="a" style="left:1661px;top:63px;width:636px;height:20px;background:#363636"></div>
<div class="a" style="left:1661px;top:83px;width:636px;height:1px;background:#242424"></div>
<div class="a" style="left:1661px;top:84px;width:203px;height:1206px;background:#323232"></div>
<div class="a" style="left:1864px;top:84px;width:1px;height:1206px;background:#1e1e1e"></div>
<div class="a" style="left:1865px;top:84px;width:432px;height:1206px;background:#2c2c2c"></div>
<div class="a" style="left:1865px;top:84px;width:432px;height:21px;background:#353535"></div>
<div class="a" style="left:1865px;top:1273px;width:432px;height:17px;background:#353535"></div>


<!-- hierarchy content -->
<svg style="left:1192px;top:49px" width="11" height="10" viewBox="0 0 11 10" stroke="#d0d0d0" stroke-width="1.1"><path d="M3 1h8M4 5h7M4 9h7M1.5 1v8M1.5 5h1.5M1.5 9h1.5"/><circle cx="1.2" cy="1" r="1" fill="#d0d0d0" stroke="none"/></svg>
<div class="t" style="left:1207px;top:49.3px;font-size:12px;line-height:12px;letter-spacing:0.3px;color:#dadada;font-weight:normal">Hierarchy</div>
<svg style="left:1625px;top:48px" width="9" height="11" viewBox="0 0 9 11" fill="none" stroke="#c8c8c8" stroke-width="1.1"><rect x=".6" y="6" width="7.8" height="4.4" rx=".8"/><path d="M1.8 6V3.2a2.7 2.7 0 0 1 5.4 0"/></svg>
<svg style="left:1645px;top:48px" width="3" height="11" viewBox="0 0 3 11" fill="#c8c8c8"><rect x="0" y="0" width="3" height="2.5"/><rect x="0" y="4.2" width="3" height="2.5"/><rect x="0" y="8.4" width="3" height="2.5"/></svg>
<svg style="left:1190px;top:67px" width="12" height="12" viewBox="0 0 12 12" stroke="#d0d0d0" stroke-width="1.6"><path d="M6 0v12M0 6h12"/></svg>
<div class="tri-d" style="left:1205px;top:72px;border-left-width:3px;border-right-width:3px;border-top-width:4px"></div>
<div class="a" style="left:1330px;top:65px;width:307px;height:16px;background:#242424;border-radius:3px 0 0 3px;border-top:1px solid #101010"></div>
<svg style="left:1335px;top:69px" width="9" height="9" viewBox="0 0 12 12" fill="none" stroke="#8a8a8a" stroke-width="1.1"><circle cx="4.8" cy="4.8" r="3.9"/><path d="M7.6 7.6 11.2 11.2" stroke-width="1.6"/></svg>
<div class="t" style="left:1350px;top:67.7px;font-size:11px;line-height:11px;letter-spacing:0px;color:#6a6a6a;font-weight:normal">All</div>
<div class="a" style="left:1637px;top:65px;width:18px;height:16px;background:#2c2c2c;border-radius:0 3px 3px 0"></div>
<svg style="left:1640px;top:67px" width="12" height="12" viewBox="0 0 12 12" fill="none" stroke="#c8c8c8" stroke-width="1"><rect x="3.5" y=".5" width="8" height="8"/><rect x=".5" y="8" width="3.5" height="3.5"/><path d="M5 7 9.5 2.5M6.5 2.5h3v3"/></svg>
<div class="tri-dd" style="left:1217px;top:89px"></div>
<svg style="left:1231px;top:85px" width="13" height="13" viewBox="0 0 14 14" fill="#ffffff"><path d="M7 0 13 3.5v7L7 14 1 10.5v-7z M7 2.2 3 4.5 7 6.8l4-2.3z M2.2 5.8v4l3.5 2V7.8z M11.8 5.8 8.3 7.8v4l3.5-2z" fill-rule="evenodd"/><path d="M6.4 0h1.2v3.5H6.4z M1 10 4 8.3l.6 1L1.6 11z M13 10 10 8.3l-.6 1 3 1.7z" fill="#2a2a2a"/></svg>
<div class="t" style="left:1248px;top:85.8px;font-size:12px;line-height:12px;letter-spacing:0.1px;color:#e0e0e0;font-weight:bold">HomeScene</div>
<svg style="left:1646px;top:87px" width="3" height="11" viewBox="0 0 3 11" fill="#c8c8c8"><rect x="0" y="0" width="3" height="2.5"/><rect x="0" y="4.2" width="3" height="2.5"/><rect x="0" y="8.4" width="3" height="2.5"/></svg>
<svg style="left:1244px;top:101px" width="14" height="14" viewBox="0 0 14 14" fill="none" stroke="#c4c4c4" stroke-width="1"><path d="M7 .8 12.8 3.8v6.4L7 13.2 1.2 10.2V3.8z M1.2 3.8 7 6.8l5.8-3M7 6.8v6.4"/></svg>
<div class="t" style="left:1261px;top:101.8px;font-size:12px;line-height:12px;letter-spacing:0.3px;color:#dadada;font-weight:normal">Main Camera</div>
<svg style="left:1244px;top:117px" width="14" height="14" viewBox="0 0 14 14" fill="none" stroke="#c4c4c4" stroke-width="1"><path d="M7 .8 12.8 3.8v6.4L7 13.2 1.2 10.2V3.8z M1.2 3.8 7 6.8l5.8-3M7 6.8v6.4"/></svg>
<div class="t" style="left:1261px;top:117.8px;font-size:12px;line-height:12px;letter-spacing:0.3px;color:#dadada;font-weight:normal">Directional Light</div>
<div class="tri-r" style="left:1233px;top:136px"></div>
<svg style="left:1244px;top:133px" width="14" height="14" viewBox="0 0 14 14" fill="none" stroke="#c4c4c4" stroke-width="1"><path d="M7 .8 12.8 3.8v6.4L7 13.2 1.2 10.2V3.8z M1.2 3.8 7 6.8l5.8-3M7 6.8v6.4"/></svg>
<div class="t" style="left:1261px;top:133.8px;font-size:12px;line-height:12px;letter-spacing:0.3px;color:#dadada;font-weight:normal">CanvasHome</div>
<svg style="left:1244px;top:149px" width="14" height="14" viewBox="0 0 14 14" fill="none" stroke="#c4c4c4" stroke-width="1"><path d="M7 .8 12.8 3.8v6.4L7 13.2 1.2 10.2V3.8z M1.2 3.8 7 6.8l5.8-3M7 6.8v6.4"/></svg>
<div class="t" style="left:1261px;top:149.8px;font-size:12px;line-height:12px;letter-spacing:0.3px;color:#dadada;font-weight:normal">EventSystem</div>
<div class="a" style="left:1206px;top:70px;width:216px;height:131px;border:3px solid #ef4d3f;border-radius:7px"></div>

<!-- project content -->
<svg style="left:1669px;top:49px" width="13" height="11" viewBox="0 0 13 11" fill="#d0d0d0"><path d="M0 1.2C0 .5.5 0 1.2 0h3.3l1.3 1.6h6c.7 0 1.2.5 1.2 1.2V9.8c0 .7-.5 1.2-1.2 1.2H1.2C.5 11 0 10.5 0 9.8z"/></svg>
<div class="t" style="left:1685px;top:48.8px;font-size:12px;line-height:12px;letter-spacing:0.3px;color:#dadada;font-weight:normal">Project</div>
<svg style="left:1751px;top:48px" width="11" height="11" viewBox="0 0 11 11" stroke="#d0d0d0" stroke-width="1.3"><path d="M1.5 0v11M5.5 0v11M9.5 0v11"/><path d="M0 3.5h3M4 7h3M8 2.5h3" stroke-width="1.8"/></svg>
<div class="t" style="left:1767px;top:48.8px;font-size:12px;line-height:12px;letter-spacing:0.3px;color:#dadada;font-weight:normal">Audio Mixer</div>
<svg style="left:2263px;top:48px" width="9" height="11" viewBox="0 0 9 11" fill="none" stroke="#c8c8c8" stroke-width="1.1"><rect x=".6" y="6" width="7.8" height="4.4" rx=".8"/><path d="M1.8 6V3.2a2.7 2.7 0 0 1 5.4 0"/></svg>
<svg style="left:2283px;top:48px" width="3" height="11" viewBox="0 0 3 11" fill="#c8c8c8"><rect x="0" y="0" width="3" height="2.5"/><rect x="0" y="4.2" width="3" height="2.5"/><rect x="0" y="8.4" width="3" height="2.5"/></svg>
<svg style="left:1668px;top:67px" width="12" height="12" viewBox="0 0 12 12" stroke="#d0d0d0" stroke-width="1.6"><path d="M6 0v12M0 6h12"/></svg>
<div class="tri-d" style="left:1684px;top:72px"></div>
<div class="a" style="left:1834px;top:65px;width:298px;height:16px;background:#242424;border-radius:3px 0 0 3px;border-top:1px solid #101010"></div>
<svg style="left:1838px;top:69px" width="8" height="8" viewBox="0 0 12 12" fill="none" stroke="#c0c0c0" stroke-width="1.1"><circle cx="4.8" cy="4.8" r="3.9"/><path d="M7.6 7.6 11.2 11.2" stroke-width="1.6"/></svg>
<div class="a" style="left:2132px;top:65px;width:18px;height:16px;background:#2c2c2c;border-radius:0 3px 3px 0"></div>
<svg style="left:2136px;top:67px" width="12" height="12" viewBox="0 0 12 12" fill="none" stroke="#c8c8c8" stroke-width="1"><rect x="3.5" y=".5" width="8" height="8"/><rect x=".5" y="8" width="3.5" height="3.5"/><path d="M5 7 9.5 2.5M6.5 2.5h3v3"/></svg>
<div class="a" style="left:2153px;top:63px;width:1px;height:20px;background:#2a2a2a"></div>
<div class="a" style="left:2179px;top:63px;width:1px;height:20px;background:#2a2a2a"></div>
<div class="a" style="left:2205px;top:63px;width:1px;height:20px;background:#2a2a2a"></div>
<div class="a" style="left:2231px;top:63px;width:1px;height:20px;background:#2a2a2a"></div>
<div class="a" style="left:2257px;top:63px;width:1px;height:20px;background:#2a2a2a"></div>
<svg style="left:2160px;top:66px" width="13" height="13" viewBox="0 0 13 13" fill="#c8c8c8"><rect x="1.2" y="0" width="5.5" height="5.5"/><circle cx="3.6" cy="9.5" r="3.5"/><path d="M9.5 4.5 13 10H6z"/></svg>
<svg style="left:2186px;top:67px" width="11" height="11" viewBox="0 0 11 11" fill="#c8c8c8"><path d="M5 .6 10 .6 10.4 5.5 5 11 0 6z"/><circle cx="8" cy="3" r="1" fill="#363636"/></svg>
<svg style="left:2211px;top:66px" width="13" height="13" viewBox="0 0 13 13"><path d="M3.8 0h5.4L13 3.8v5.4L9.2 13H3.8L0 9.2V3.8z" fill="#c8c8c8"/><path d="M5.8 2.5h1.4l-.2 5.5h-1z M5.8 9.2h1.4v1.4H5.8z" fill="#363636"/></svg>
<svg style="left:2238px;top:67px" width="13" height="12" viewBox="0 0 13 12" fill="#8a8a8a"><path d="M6.5 0l1.9 4 4.1.4-3.1 2.8.9 4.3-3.8-2.2-3.8 2.2.9-4.3L.5 4.4 4.6 4z"/></svg>
<svg style="left:2263px;top:67px" width="15" height="12" viewBox="0 0 15 12" fill="none" stroke="#c8c8c8" stroke-width="1.1"><path d="M.8 6.5Q7.5-1 14.2 6.5Q7.5 13.5.8 6.5z"/><path d="M5.2 8.2A2.6 2.6 0 0 1 9.6 5"/><path d="M12.8.3 2.2 11.7" stroke-width="1.2"/></svg>
<div class="t" style="left:2278px;top:67.8px;font-size:12px;line-height:12px;letter-spacing:0px;color:#c8c8c8;font-weight:normal">21</div>
<div class="tri-dd" style="left:1665px;top:88px"></div>
<svg style="left:1679px;top:86px" width="13" height="12" viewBox="0 0 13 12" fill="#c8c8c8"><path d="M6.5 0l1.9 4 4.1.4-3.1 2.8.9 4.3-3.8-2.2-3.8 2.2.9-4.3L.5 4.4 4.6 4z"/></svg>
<div class="t" style="left:1697px;top:85.8px;font-size:12px;line-height:12px;letter-spacing:0.1px;color:#dadada;font-weight:bold">Favorites</div>
<svg style="left:1693px;top:102px" width="12" height="12" viewBox="0 0 12 12" fill="none" stroke="#c8c8c8" stroke-width="1.1"><circle cx="4.8" cy="4.8" r="3.9"/><path d="M7.6 7.6 11.2 11.2" stroke-width="1.6"/></svg>
<div class="t" style="left:1709px;top:101.8px;font-size:12px;line-height:12px;letter-spacing:0.3px;color:#dadada;font-weight:normal">All Materials</div>
<svg style="left:1693px;top:118px" width="12" height="12" viewBox="0 0 12 12" fill="none" stroke="#c8c8c8" stroke-width="1.1"><circle cx="4.8" cy="4.8" r="3.9"/><path d="M7.6 7.6 11.2 11.2" stroke-width="1.6"/></svg>
<div class="t" style="left:1709px;top:117.8px;font-size:12px;line-height:12px;letter-spacing:0.3px;color:#dadada;font-weight:normal">All Models</div>
<svg style="left:1693px;top:134px" width="12" height="12" viewBox="0 0 12 12" fill="none" stroke="#c8c8c8" stroke-width="1.1"><circle cx="4.8" cy="4.8" r="3.9"/><path d="M7.6 7.6 11.2 11.2" stroke-width="1.6"/></svg>
<div class="t" style="left:1709px;top:133.8px;font-size:12px;line-height:12px;letter-spacing:0.3px;color:#dadada;font-weight:normal">All Prefabs</div>
<div class="tri-dd" style="left:1665px;top:167px"></div>
<svg style="left:1679px;top:165px" width="14" height="11" viewBox="0 0 14 11" fill="#c4c4c4"><path d="M0 1.2C0 .5.5 0 1.2 0h3.3l1.3 1.6h5c.7 0 1.2.5 1.2 1.2v.9H3.2L0 9z"/><path d="M3.6 4.6H14L11 11H0z"/></svg>
<div class="t" style="left:1697px;top:164.8px;font-size:12px;line-height:12px;letter-spacing:0.1px;color:#dadada;font-weight:bold">Assets</div>
<svg style="left:1693px;top:181px" width="13" height="11" viewBox="0 0 13 11" fill="#c4c4c4"><path d="M0 1.2C0 .5.5 0 1.2 0h3.3l1.3 1.6h6c.7 0 1.2.5 1.2 1.2V9.8c0 .7-.5 1.2-1.2 1.2H1.2C.5 11 0 10.5 0 9.8z"/></svg>
<div class="t" style="left:1709px;top:180.8px;font-size:12px;line-height:12px;letter-spacing:0.3px;color:#dadada;font-weight:normal">Editor</div>
<div class="tri-r" style="left:1680px;top:199px"></div>
<svg style="left:1693px;top:197px" width="13" height="11" viewBox="0 0 13 11" fill="#c4c4c4"><path d="M0 1.2C0 .5.5 0 1.2 0h3.3l1.3 1.6h6c.7 0 1.2.5 1.2 1.2V9.8c0 .7-.5 1.2-1.2 1.2H1.2C.5 11 0 10.5 0 9.8z"/></svg>
<div class="t" style="left:1709px;top:196.8px;font-size:12px;line-height:12px;letter-spacing:0.3px;color:#dadada;font-weight:normal">Plugins</div>
<svg style="left:1693px;top:213px" width="13" height="11" viewBox="0 0 13 11" fill="#c4c4c4"><path d="M0 1.2C0 .5.5 0 1.2 0h3.3l1.3 1.6h6c.7 0 1.2.5 1.2 1.2V9.8c0 .7-.5 1.2-1.2 1.2H1.2C.5 11 0 10.5 0 9.8z"/></svg>
<div class="t" style="left:1709px;top:212.8px;font-size:12px;line-height:12px;letter-spacing:0.3px;color:#dadada;font-weight:normal">StreamingAssets</div>
<div class="tri-dd" style="left:1679px;top:231px"></div>
<svg style="left:1693px;top:229px" width="14" height="11" viewBox="0 0 14 11" fill="#c4c4c4"><path d="M0 1.2C0 .5.5 0 1.2 0h3.3l1.3 1.6h5c.7 0 1.2.5 1.2 1.2v.9H3.2L0 9z"/><path d="M3.6 4.6H14L11 11H0z"/></svg>
<div class="t" style="left:1709px;top:228.8px;font-size:12px;line-height:12px;letter-spacing:0.3px;color:#dadada;font-weight:normal">TRTCSDK</div>
<div class="a" style="left:1661px;top:243px;width:203px;height:16px;background:#464646"></div>
<div class="tri-r" style="left:1694px;top:247px"></div>
<svg style="left:1707px;top:245px" width="13" height="11" viewBox="0 0 13 11" fill="#c4c4c4"><path d="M0 1.2C0 .5.5 0 1.2 0h3.3l1.3 1.6h6c.7 0 1.2.5 1.2 1.2V9.8c0 .7-.5 1.2-1.2 1.2H1.2C.5 11 0 10.5 0 9.8z"/></svg>
<div class="t" style="left:1723px;top:244.8px;font-size:12px;line-height:12px;letter-spacing:0.3px;color:#dadada;font-weight:normal">Demo</div>
<svg style="left:1707px;top:261px" width="13" height="11" viewBox="0 0 13 11" fill="#c4c4c4"><path d="M0 1.2C0 .5.5 0 1.2 0h3.3l1.3 1.6h6c.7 0 1.2.5 1.2 1.2V9.8c0 .7-.5 1.2-1.2 1.2H1.2C.5 11 0 10.5 0 9.8z"/></svg>
<div class="t" style="left:1723px;top:260.8px;font-size:12px;line-height:12px;letter-spacing:0.3px;color:#dadada;font-weight:normal">Editor</div>
<div class="tri-r" style="left:1694px;top:279px"></div>
<svg style="left:1707px;top:277px" width="13" height="11" viewBox="0 0 13 11" fill="#c4c4c4"><path d="M0 1.2C0 .5.5 0 1.2 0h3.3l1.3 1.6h6c.7 0 1.2.5 1.2 1.2V9.8c0 .7-.5 1.2-1.2 1.2H1.2C.5 11 0 10.5 0 9.8z"/></svg>
<div class="t" style="left:1723px;top:276.8px;font-size:12px;line-height:12px;letter-spacing:0.3px;color:#dadada;font-weight:normal">SDK</div>
<div class="tri-dd" style="left:1665px;top:295px"></div>
<svg style="left:1679px;top:293px" width="14" height="11" viewBox="0 0 14 11" fill="#c4c4c4"><path d="M0 1.2C0 .5.5 0 1.2 0h3.3l1.3 1.6h5c.7 0 1.2.5 1.2 1.2v.9H3.2L0 9z"/><path d="M3.6 4.6H14L11 11H0z"/></svg>
<div class="t" style="left:1697px;top:292.8px;font-size:12px;line-height:12px;letter-spacing:0.1px;color:#dadada;font-weight:bold">Packages</div>
<div class="tri-r" style="left:1680px;top:311px"></div>
<svg style="left:1693px;top:309px" width="13" height="11" viewBox="0 0 13 11" fill="#c4c4c4"><path d="M0 1.2C0 .5.5 0 1.2 0h3.3l1.3 1.6h6c.7 0 1.2.5 1.2 1.2V9.8c0 .7-.5 1.2-1.2 1.2H1.2C.5 11 0 10.5 0 9.8z"/></svg>
<div class="t" style="left:1709px;top:308.8px;font-size:12px;line-height:12px;letter-spacing:0.2px;color:#dadada;font-weight:normal">2D Animation</div>
<div class="tri-r" style="left:1680px;top:327px"></div>
<svg style="left:1693px;top:325px" width="13" height="11" viewBox="0 0 13 11" fill="#c4c4c4"><path d="M0 1.2C0 .5.5 0 1.2 0h3.3l1.3 1.6h6c.7 0 1.2.5 1.2 1.2V9.8c0 .7-.5 1.2-1.2 1.2H1.2C.5 11 0 10.5 0 9.8z"/></svg>
<div class="t" style="left:1709px;top:324.8px;font-size:12px;line-height:12px;letter-spacing:0.2px;color:#dadada;font-weight:normal">2D Common</div>
<div class="tri-r" style="left:1680px;top:343px"></div>
<svg style="left:1693px;top:341px" width="13" height="11" viewBox="0 0 13 11" fill="#c4c4c4"><path d="M0 1.2C0 .5.5 0 1.2 0h3.3l1.3 1.6h6c.7 0 1.2.5 1.2 1.2V9.8c0 .7-.5 1.2-1.2 1.2H1.2C.5 11 0 10.5 0 9.8z"/></svg>
<div class="t" style="left:1709px;top:340.8px;font-size:12px;line-height:12px;letter-spacing:0.2px;color:#dadada;font-weight:normal">2D Pixel Perfect</div>
<div class="tri-r" style="left:1680px;top:359px"></div>
<svg style="left:1693px;top:357px" width="13" height="11" viewBox="0 0 13 11" fill="#c4c4c4"><path d="M0 1.2C0 .5.5 0 1.2 0h3.3l1.3 1.6h6c.7 0 1.2.5 1.2 1.2V9.8c0 .7-.5 1.2-1.2 1.2H1.2C.5 11 0 10.5 0 9.8z"/></svg>
<div class="t" style="left:1709px;top:356.8px;font-size:12px;line-height:12px;letter-spacing:0.2px;color:#dadada;font-weight:normal">2D PSD Importer</div>
<div class="tri-r" style="left:1680px;top:375px"></div>
<svg style="left:1693px;top:373px" width="13" height="11" viewBox="0 0 13 11" fill="#c4c4c4"><path d="M0 1.2C0 .5.5 0 1.2 0h3.3l1.3 1.6h6c.7 0 1.2.5 1.2 1.2V9.8c0 .7-.5 1.2-1.2 1.2H1.2C.5 11 0 10.5 0 9.8z"/></svg>
<div class="t" style="left:1709px;top:372.8px;font-size:12px;line-height:12px;letter-spacing:0.2px;color:#dadada;font-weight:normal">2D Sprite</div>
<div class="tri-r" style="left:1680px;top:391px"></div>
<svg style="left:1693px;top:389px" width="13" height="11" viewBox="0 0 13 11" fill="#c4c4c4"><path d="M0 1.2C0 .5.5 0 1.2 0h3.3l1.3 1.6h6c.7 0 1.2.5 1.2 1.2V9.8c0 .7-.5 1.2-1.2 1.2H1.2C.5 11 0 10.5 0 9.8z"/></svg>
<div class="t" style="left:1709px;top:388.8px;font-size:12px;line-height:12px;letter-spacing:0.2px;color:#dadada;font-weight:normal">2D SpriteShape</div>
<div class="tri-r" style="left:1680px;top:407px"></div>
<svg style="left:1693px;top:405px" width="13" height="11" viewBox="0 0 13 11" fill="#c4c4c4"><path d="M0 1.2C0 .5.5 0 1.2 0h3.3l1.3 1.6h6c.7 0 1.2.5 1.2 1.2V9.8c0 .7-.5 1.2-1.2 1.2H1.2C.5 11 0 10.5 0 9.8z"/></svg>
<div class="t" style="left:1709px;top:404.8px;font-size:12px;line-height:12px;letter-spacing:0.2px;color:#dadada;font-weight:normal">2D Tilemap Editor</div>
<div class="tri-r" style="left:1680px;top:423px"></div>
<svg style="left:1693px;top:421px" width="13" height="11" viewBox="0 0 13 11" fill="#c4c4c4"><path d="M0 1.2C0 .5.5 0 1.2 0h3.3l1.3 1.6h6c.7 0 1.2.5 1.2 1.2V9.8c0 .7-.5 1.2-1.2 1.2H1.2C.5 11 0 10.5 0 9.8z"/></svg>
<div class="t" style="left:1709px;top:420.8px;font-size:12px;line-height:12px;letter-spacing:0.2px;color:#dadada;font-weight:normal">AI Navigation</div>
<div class="tri-r" style="left:1680px;top:439px"></div>
<svg style="left:1693px;top:437px" width="13" height="11" viewBox="0 0 13 11" fill="#c4c4c4"><path d="M0 1.2C0 .5.5 0 1.2 0h3.3l1.3 1.6h6c.7 0 1.2.5 1.2 1.2V9.8c0 .7-.5 1.2-1.2 1.2H1.2C.5 11 0 10.5 0 9.8z"/></svg>
<div class="t" style="left:1709px;top:436.8px;font-size:12px;line-height:12px;letter-spacing:0.2px;color:#dadada;font-weight:normal">Android Logcat</div>
<div class="tri-r" style="left:1680px;top:455px"></div>
<svg style="left:1693px;top:453px" width="13" height="11" viewBox="0 0 13 11" fill="#c4c4c4"><path d="M0 1.2C0 .5.5 0 1.2 0h3.3l1.3 1.6h6c.7 0 1.2.5 1.2 1.2V9.8c0 .7-.5 1.2-1.2 1.2H1.2C.5 11 0 10.5 0 9.8z"/></svg>
<div class="t" style="left:1709px;top:452.8px;font-size:12px;line-height:12px;letter-spacing:0.2px;color:#dadada;font-weight:normal">Burst</div>
<div class="tri-r" style="left:1680px;top:471px"></div>
<svg style="left:1693px;top:469px" width="13" height="11" viewBox="0 0 13 11" fill="#c4c4c4"><path d="M0 1.2C0 .5.5 0 1.2 0h3.3l1.3 1.6h6c.7 0 1.2.5 1.2 1.2V9.8c0 .7-.5 1.2-1.2 1.2H1.2C.5 11 0 10.5 0 9.8z"/></svg>
<div class="t" style="left:1709px;top:468.8px;font-size:12px;line-height:12px;letter-spacing:0.2px;color:#dadada;font-weight:normal">Collections</div>
<div class="tri-r" style="left:1680px;top:487px"></div>
<svg style="left:1693px;top:485px" width="13" height="11" viewBox="0 0 13 11" fill="#c4c4c4"><path d="M0 1.2C0 .5.5 0 1.2 0h3.3l1.3 1.6h6c.7 0 1.2.5 1.2 1.2V9.8c0 .7-.5 1.2-1.2 1.2H1.2C.5 11 0 10.5 0 9.8z"/></svg>
<div class="t" style="left:1709px;top:484.8px;font-size:12px;line-height:12px;letter-spacing:0.2px;color:#dadada;font-weight:normal">Custom NUnit</div>
<div class="tri-r" style="left:1680px;top:503px"></div>
<svg style="left:1693px;top:501px" width="13" height="11" viewBox="0 0 13 11" fill="#c4c4c4"><path d="M0 1.2C0 .5.5 0 1.2 0h3.3l1.3 1.6h6c.7 0 1.2.5 1.2 1.2V9.8c0 .7-.5 1.2-1.2 1.2H1.2C.5 11 0 10.5 0 9.8z"/></svg>
<div class="t" style="left:1709px;top:500.8px;font-size:12px;line-height:12px;letter-spacing:0.2px;color:#dadada;font-weight:normal">JetBrains Rider Editor</div>
<div class="tri-r" style="left:1680px;top:519px"></div>
<svg style="left:1693px;top:517px" width="13" height="11" viewBox="0 0 13 11" fill="#c4c4c4"><path d="M0 1.2C0 .5.5 0 1.2 0h3.3l1.3 1.6h6c.7 0 1.2.5 1.2 1.2V9.8c0 .7-.5 1.2-1.2 1.2H1.2C.5 11 0 10.5 0 9.8z"/></svg>
<div class="t" style="left:1709px;top:516.8px;font-size:12px;line-height:12px;letter-spacing:0.2px;color:#dadada;font-weight:normal">Mathematics</div>
<div class="tri-r" style="left:1680px;top:535px"></div>
<svg style="left:1693px;top:533px" width="13" height="11" viewBox="0 0 13 11" fill="#c4c4c4"><path d="M0 1.2C0 .5.5 0 1.2 0h3.3l1.3 1.6h6c.7 0 1.2.5 1.2 1.2V9.8c0 .7-.5 1.2-1.2 1.2H1.2C.5 11 0 10.5 0 9.8z"/></svg>
<div class="t" style="left:1709px;top:532.8px;font-size:12px;line-height:12px;letter-spacing:0.2px;color:#dadada;font-weight:normal">Test Framework</div>
<div class="tri-r" style="left:1680px;top:551px"></div>
<svg style="left:1693px;top:549px" width="13" height="11" viewBox="0 0 13 11" fill="#c4c4c4"><path d="M0 1.2C0 .5.5 0 1.2 0h3.3l1.3 1.6h6c.7 0 1.2.5 1.2 1.2V9.8c0 .7-.5 1.2-1.2 1.2H1.2C.5 11 0 10.5 0 9.8z"/></svg>
<div class="t" style="left:1709px;top:548.8px;font-size:12px;line-height:12px;letter-spacing:0.2px;color:#dadada;font-weight:normal">TextMeshPro</div>
<div class="tri-r" style="left:1680px;top:567px"></div>
<svg style="left:1693px;top:565px" width="13" height="11" viewBox="0 0 13 11" fill="#c4c4c4"><path d="M0 1.2C0 .5.5 0 1.2 0h3.3l1.3 1.6h6c.7 0 1.2.5 1.2 1.2V9.8c0 .7-.5 1.2-1.2 1.2H1.2C.5 11 0 10.5 0 9.8z"/></svg>
<div class="t" style="left:1709px;top:564.8px;font-size:12px;line-height:12px;letter-spacing:0.2px;color:#dadada;font-weight:normal">Timeline</div>
<div class="tri-r" style="left:1680px;top:583px"></div>
<svg style="left:1693px;top:581px" width="13" height="11" viewBox="0 0 13 11" fill="#c4c4c4"><path d="M0 1.2C0 .5.5 0 1.2 0h3.3l1.3 1.6h6c.7 0 1.2.5 1.2 1.2V9.8c0 .7-.5 1.2-1.2 1.2H1.2C.5 11 0 10.5 0 9.8z"/></svg>
<div class="t" style="left:1709px;top:580.8px;font-size:12px;line-height:12px;letter-spacing:0.2px;color:#dadada;font-weight:normal">Unity UI</div>
<div class="tri-r" style="left:1680px;top:599px"></div>
<svg style="left:1693px;top:597px" width="13" height="11" viewBox="0 0 13 11" fill="#c4c4c4"><path d="M0 1.2C0 .5.5 0 1.2 0h3.3l1.3 1.6h6c.7 0 1.2.5 1.2 1.2V9.8c0 .7-.5 1.2-1.2 1.2H1.2C.5 11 0 10.5 0 9.8z"/></svg>
<div class="t" style="left:1709px;top:596.8px;font-size:12px;line-height:12px;letter-spacing:0.2px;color:#dadada;font-weight:normal">Version Control</div>
<div class="tri-r" style="left:1680px;top:615px"></div>
<svg style="left:1693px;top:613px" width="13" height="11" viewBox="0 0 13 11" fill="#c4c4c4"><path d="M0 1.2C0 .5.5 0 1.2 0h3.3l1.3 1.6h6c.7 0 1.2.5 1.2 1.2V9.8c0 .7-.5 1.2-1.2 1.2H1.2C.5 11 0 10.5 0 9.8z"/></svg>
<div class="t" style="left:1709px;top:612.8px;font-size:12px;line-height:12px;letter-spacing:0.2px;color:#dadada;font-weight:normal">Visual Studio Code Editor</div>
<div class="tri-r" style="left:1680px;top:631px"></div>
<svg style="left:1693px;top:629px" width="13" height="11" viewBox="0 0 13 11" fill="#c4c4c4"><path d="M0 1.2C0 .5.5 0 1.2 0h3.3l1.3 1.6h6c.7 0 1.2.5 1.2 1.2V9.8c0 .7-.5 1.2-1.2 1.2H1.2C.5 11 0 10.5 0 9.8z"/></svg>
<div class="t" style="left:1709px;top:628.8px;font-size:12px;line-height:12px;letter-spacing:0.2px;color:#dadada;font-weight:normal">Visual Studio Editor</div>
<div class="t" style="left:1869px;top:88.2px;font-size:12px;line-height:12px;letter-spacing:0.3px;color:#bdbdbd;font-weight:normal">Assets</div>
<svg style="left:1912px;top:90px" width="6" height="9" viewBox="0 0 6 9" fill="none" stroke="#9a9a9a" stroke-width="1.1"><path d="M1 .5 5 4.5 1 8.5"/></svg>
<div class="t" style="left:1925px;top:88.2px;font-size:12px;line-height:12px;letter-spacing:0.3px;color:#bdbdbd;font-weight:normal">TRTCSDK</div>
<svg style="left:1989px;top:90px" width="6" height="9" viewBox="0 0 6 9" fill="none" stroke="#9a9a9a" stroke-width="1.1"><path d="M1 .5 5 4.5 1 8.5"/></svg>
<div class="t" style="left:2001px;top:88.2px;font-size:12px;line-height:12px;letter-spacing:0.2px;color:#dedede;font-weight:bold">Demo</div>
<svg style="left:1891px;top:127px" width="48" height="40" viewBox="0 0 48 40" fill="#b9b9b9"><path d="M0 3C0 1.3 1.3 0 3 0h17l4.5 7.5H45c1.7 0 3 1.3 3 3V37c0 1.7-1.3 3-3 3H3c-1.7 0-3-1.3-3-3z"/></svg>
<div class="t" style="left:1893px;top:183.5px;font-size:10px;line-height:10px;letter-spacing:0.1px;color:#d0d0d0;font-weight:normal">Extension</div>
<svg style="left:1974px;top:118px" width="48" height="57" viewBox="0 0 48 57"><path d="M24 0 48 14v29L24 57 0 43V14z" fill="#c9d5ef"/><path d="M24 28.5 48 14v29L24 57z" fill="#a7b4d0"/><path d="M24 28.5 0 14v29L24 57z" fill="#bcc9e6"/><path d="M22.6 0h2.8v11.5h-2.8z" fill="#2c2c2c"/><path d="M13.5 15.6 24 9.6l10.5 6L24 21.7z" fill="#2c2c2c"/><path d="M8 23.2v14.2l10.2 5.9v-14z" fill="#2c2c2c"/><path d="M40 23.2v14.2l-10.2 5.9v-14z" fill="#2c2c2c"/><path d="M0 43 10 37.2l1.4 2.4L1.4 45.4z M48 43 38 37.2l-1.4 2.4 10 5.8z" fill="#2c2c2c"/></svg>
<div class="a" style="left:1963px;top:180px;width:70px;height:14px;background:#464646;border-radius:3px"></div>
<div class="t" style="left:1970px;top:183.5px;font-size:10px;line-height:10px;letter-spacing:0.1px;color:#dcdcdc;font-weight:normal">HomeScene</div>
<svg style="left:2056px;top:119px" width="48" height="56" viewBox="0 0 48 56"><path d="M3 0h32.6L48 12.4V53c0 1.7-1.3 3-3 3H3c-1.7 0-3-1.3-3-3V3C0 1.3 1.3 0 3 0z" fill="#ebebeb"/><path d="M19.6 12h4.2l-4.9 34.8h-4.9z M28.3 12h4.5l-4.9 34.8h-4.9z M10.8 20h26.2v3.8H10.8z M9.1 32h26.2v4.3H9.1z" fill="#215c21"/></svg>
<div class="t" style="left:2050px;top:183.5px;font-size:10px;line-height:10px;letter-spacing:0.3px;color:#d0d0d0;font-weight:normal">HomeScen...</div>
<svg style="left:2139px;top:127px" width="48" height="40" viewBox="0 0 48 40" fill="#b9b9b9"><path d="M0 3C0 1.3 1.3 0 3 0h17l4.5 7.5H45c1.7 0 3 1.3 3 3V37c0 1.7-1.3 3-3 3H3c-1.7 0-3-1.3-3-3z"/></svg>
<div class="t" style="left:2154px;top:183.5px;font-size:10px;line-height:10px;letter-spacing:0.3px;color:#d0d0d0;font-weight:normal">LIVE</div>
<svg style="left:2222px;top:127px" width="48" height="40" viewBox="0 0 48 40" fill="#b9b9b9"><path d="M0 3C0 1.3 1.3 0 3 0h17l4.5 7.5H45c1.7 0 3 1.3 3 3V37c0 1.7-1.3 3-3 3H3c-1.7 0-3-1.3-3-3z"/></svg>
<div class="t" style="left:2223px;top:183.5px;font-size:10px;line-height:10px;letter-spacing:0.2px;color:#d0d0d0;font-weight:normal">ThirtParty</div>
<svg style="left:1891px;top:220px" width="48" height="40" viewBox="0 0 48 40" fill="#b9b9b9"><path d="M0 3C0 1.3 1.3 0 3 0h17l4.5 7.5H45c1.7 0 3 1.3 3 3V37c0 1.7-1.3 3-3 3H3c-1.7 0-3-1.3-3-3z"/></svg>
<div class="t" style="left:1902px;top:276.5px;font-size:10px;line-height:10px;letter-spacing:0.3px;color:#d0d0d0;font-weight:normal">TRTC</div>
<div class="a" style="left:1852px;top:66px;width:223px;height:53px;border:3px solid #ef4d3f;border-radius:7px"></div>
<svg style="left:1990px;top:190px" width="50" height="60" viewBox="0 0 50 60"><path d="M40 54 17 16" stroke="#ef4d3f" stroke-width="2.6" stroke-linecap="round"/><path d="M12 9 24 14.5 13.5 21z" fill="#ef4d3f"/></svg>
<svg style="left:1870px;top:1277px" width="12" height="12" viewBox="0 0 14 14" fill="#d8d8d8"><path d="M7 0 13 3.5v7L7 14 1 10.5v-7z M7 2.2 3 4.5 7 6.8l4-2.3z M2.2 5.8v4l3.5 2V7.8z M11.8 5.8 8.3 7.8v4l3.5-2z" fill-rule="evenodd"/><path d="M6.4 0h1.2v3.5H6.4z M1 10 4 8.3l.6 1L1.6 11z M13 10 10 8.3l-.6 1 3 1.7z" fill="#2a2a2a"/></svg>
<div class="t" style="left:1886px;top:1277.8px;font-size:12px;line-height:12px;letter-spacing:0.3px;color:#d0d0d0;font-weight:normal">Assets/TRTCSDK/Demo/HomeScene.unity</div>
<div class="a" style="left:2227px;top:1283px;width:54px;height:1px;background:#6a6a6a"></div>
<div class="a" style="left:2252px;top:1278px;width:11px;height:11px;border-radius:50%;background:#9c9c9c"></div>
</body></html>
